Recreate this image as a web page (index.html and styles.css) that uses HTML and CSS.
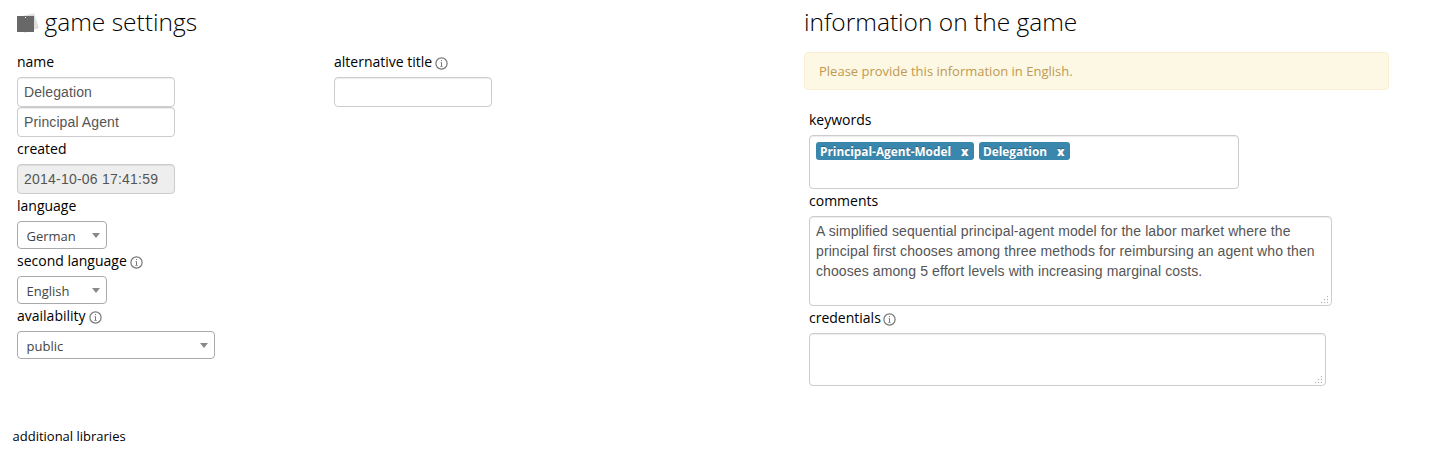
FILE: index.html
```html
<!DOCTYPE html>
<html lang="en">
<head>
<meta charset="utf-8">
<title>game settings</title>
<link rel="stylesheet" href="styles.css">
</head>
<body>
<svg class="defs" width="0" height="0">
  <symbol id="info" viewBox="0 0 13 13">
    <circle cx="6.5" cy="6.5" r="5.6" fill="none" stroke="#777" stroke-width="1.2"/>
    <path d="M6 3h1v1H6zM5.5 5.2H7v4h-1V6h-.5zM5.3 9h2.4v.7H5.3z" fill="#777"/>
  </symbol>
  <symbol id="grip" viewBox="0 0 8 8">
    <path d="M7 0h1v1H7zM4 3h1v1H4zM7 3h1v1H7zM1 6h1v1H1zM4 6h1v1H4zM7 6h1v1H7z" fill="#999" stroke="#ccc" stroke-width=".4"/>
  </symbol>
</svg>
<main class="page">
  <section class="settings">
    <h3 class="title">
      <svg class="notes" width="22" height="22" viewBox="0 0 22 22">
        <path d="M5 3l12-2.500 5 14.500-15 5z" fill="#ddd"/>
        <path d="M0 3h17v16H0z" fill="#686868"/>
        <path d="M8 4h1v1H8z" fill="#eee"/>
      </svg>
      <span>game settings</span>
    </h3>
    <div class="columns">
      <div class="column">
        <div class="label">name</div>
        <div class="input">Delegation</div>
        <div class="input">Principal Agent</div>
        <div class="label">created</div>
        <div class="input disabled">2014-10-06 17:41:59</div>
        <div class="label">language</div>
        <div class="select"><span>German</span><i class="caret"></i></div>
        <div class="label">second language<svg class="info"><use href="#info"/></svg></div>
        <div class="select"><span>English</span><i class="caret"></i></div>
        <div class="label">availability<svg class="info"><use href="#info"/></svg></div>
        <div class="select wide"><span>public</span><i class="caret"></i></div>
      </div>
      <div class="column">
        <div class="label">alternative title<svg class="info"><use href="#info"/></svg></div>
        <div class="input"></div>
      </div>
    </div>
    <div class="libraries">additional libraries</div>
  </section>
  <section class="information">
    <h3 class="title">information on the game</h3>
    <div class="alert">Please provide this information in English.</div>
    <div class="details">
      <div class="label">keywords</div>
      <div class="box keywords">
        <span class="tag">Principal-Agent-Model<b class="remove">x</b></span>
        <span class="tag">Delegation<b class="remove">x</b></span>
      </div>
      <div class="label">comments</div>
      <div class="box comments">A simplified sequential principal-agent model for the labor market where the<br>principal first chooses among three methods for reimbursing an agent who then<br>chooses among 5 effort levels with increasing marginal costs.<svg class="grip"><use href="#grip"/></svg></div>
      <div class="label">credentials<svg class="info"><use href="#info"/></svg></div>
      <div class="box credentials"><svg class="grip"><use href="#grip"/></svg></div>
    </div>
  </section>
</main>
</body>
</html>
```
FILE: styles.css
```css
* { box-sizing: border-box; }
body {
  margin: 0;
  background: #fff;
  color: #000;
  font: 14px/20px "Open Sans", sans-serif;
}
.defs { display: block; height: 0; }
.page { display: flex; height: 467px; overflow: hidden; }
.settings { width: 804px; padding-left: 17px; }
.information { width: 585px; }
.title {
  display: flex;
  align-items: center;
  height: 44px;
  margin: 0 0 6px;
  font-size: 24.5px;
  font-weight: 300;
  line-height: 40px;
  white-space: nowrap;
}
.notes { margin: 4px 5.5px 0 0; }
.columns { display: flex; height: 376px; }
.column { width: 317px; }
.label {
  display: flex;
  height: 27px;
  padding-top: 2px;
  white-space: nowrap;
}
.info { width: 13px; height: 13px; margin: 5px 0 0 3px; }
.details .info { margin-left: 2px; }
.input {
  width: 158px;
  height: 30px;
  padding: 4px 6px;
  border: 1px solid #ccc;
  border-radius: 4px;
  box-shadow: inset 0 1px 1px rgba(0, 0, 0, .075);
  color: #555;
  font: 14px/20px "Liberation Sans", Arial, sans-serif;
  letter-spacing: .1px;
  white-space: nowrap;
}
.disabled { background: #eee; letter-spacing: .22px; }
.select {
  display: flex;
  justify-content: space-between;
  width: 90px;
  height: 28px;
  padding: 4px 6px 0 8.5px;
  border: 1px solid #aaa;
  border-radius: 4px;
  color: #444;
  font-size: 13px;
}
.wide { width: 198px; }
.caret {
  height: 0;
  margin-top: 7px;
  border: 4px solid transparent;
  border-top: 5px solid #888;
  border-bottom: 0;
}
.libraries { margin-left: -4.5px; font-size: 13px; }
.information .title { margin-bottom: 8px; }
.alert {
  height: 38px;
  padding: 8px 14px;
  border: 1px solid #fbeed5;
  border-radius: 4px;
  background: #fcf8e3;
  color: #c09853;
  font-size: 13px;
}
.details { padding: 18px 0 0 5px; }
.box {
  position: relative;
  border: 1px solid #ccc;
  border-radius: 4px;
  box-shadow: inset 0 1px 1px rgba(0, 0, 0, .075);
  color: #555;
}
.keywords {
  display: flex;
  align-items: flex-start;
  gap: 5px;
  width: 430px;
  height: 54px;
  padding: 6px;
}
.tag {
  height: 18px;
  padding: 0 5.5px 0 4px;
  border-radius: 3px;
  background: #3a87ad;
  color: #fff;
  font-size: 11.84px;
  font-weight: 700;
  line-height: 19px;
  text-shadow: 0 -1px 0 rgba(0, 0, 0, .25);
}
.remove { margin-left: 10px; }
.comments {
  width: 523px;
  height: 90px;
  padding: 4px 6px;
  font: 14px/20px "Liberation Sans", Arial, sans-serif;
  letter-spacing: .1px;
  white-space: nowrap;
}
.credentials { width: 517px; height: 53px; }
.grip { position: absolute; right: 3px; bottom: 1px; width: 8px; height: 8px; }
```
